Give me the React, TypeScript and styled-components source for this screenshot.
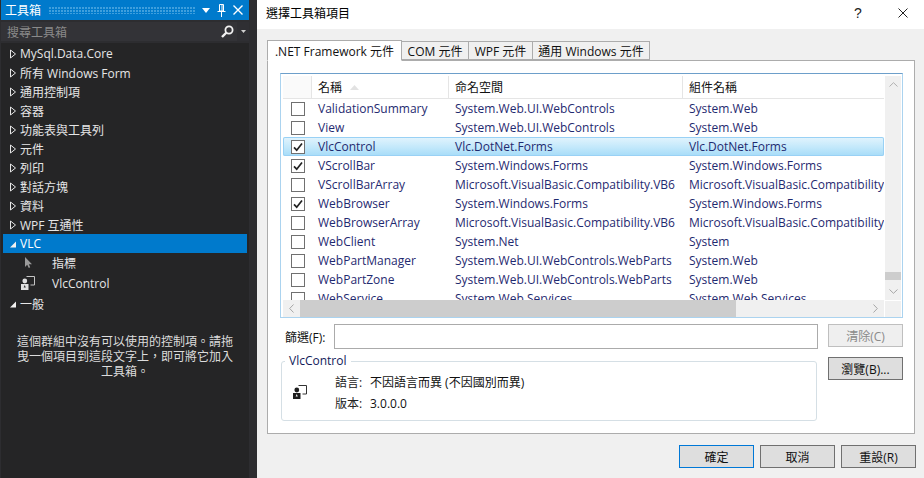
import React from "react";
import styled, { createGlobalStyle } from "styled-components";

const Global = createGlobalStyle`
  html, body { margin: 0; padding: 0; width: 924px; height: 478px; overflow: hidden; background: #f0f0f0; }
  #root { width: 924px; height: 478px; }
  * { box-sizing: border-box; }
`;
const FONT = `"Open Sans", "Noto Sans CJK TC", sans-serif`;

const Page = styled.div`
  display: flex; width: 924px; height: 478px; font-family: ${FONT}; font-size: 12px; overflow: hidden;
`;
const Toolbox = styled.aside`
  width: 257px; height: 478px; background: #2d2d30; padding: 0 8px 0 1px; display: flex; flex-direction: column; flex: none;
`;
const ToolTitle = styled.header`
  height: 20px; background: #007acc; color: #fff; display: flex; align-items: center; padding: 0 6px 0 4px; font-size: 12px; flex: none;
`;
const Grip = styled.div`
  flex: 1; height: 7px; margin: 0 6px 0 8px;
  background-image: radial-gradient(circle at 1px 1px, #3f9fdd 0.8px, transparent 1px);
  background-size: 3px 3px;
`;
const TitleIcons = styled.div`display: flex; align-items: center; gap: 7px; color: #fff;`;
const SearchRow = styled.div`
  height: 19px; margin-top: 2px; background: #333337; color: #8a8a8a; display: flex; align-items: center; padding-left: 6px; flex: none; font-size: 12px;
`;
const SearchText = styled.span`flex: 1;`;
const SearchIconWrap = styled.div`display: flex; align-items: center; padding-right: 3px;`;
const SearchCaret = styled.div`display: flex; align-items: center; justify-content: center; width: 12px; height: 100%; background: #2f2f33;`;
const Tree = styled.div`
  flex: 1; margin-top: 1px; background: #252526; color: #f1f1f1; padding: 1px 2px 0 2px; border-top: 1px solid #2d2d30;
`;
const TreeRow = styled.div<{ $active?: boolean }>`
  height: 19px; display: flex; align-items: center; padding-left: 6px; gap: 3px; white-space: nowrap; font-size: 12px;
  background: ${(p) => (p.$active ? "#007acc" : "transparent")};
  color: ${(p) => (p.$active ? "#fff" : "#e6e6e6")};
`;
const ToolRow = styled.div<{ $tall?: boolean }>`
  height: ${(p) => (p.$tall ? 22 : 19)}px; display: flex; align-items: center; white-space: nowrap; color: #e6e6e6; font-size: 12px;
  padding-left: 17px;
`;
const ToolIcon = styled.span`width: 16px; margin-right: 16px; display: flex; justify-content: center; flex: none;`;
const EmptyNote = styled.p`
  margin: 21px 13px 0; text-align: center; line-height: 15px; font-size: 12px; color: #dcdcdc;
`;

const Dialog = styled.main`flex: 1; min-width: 0; height: 478px; display: flex; flex-direction: column; background: #f0f0f0; color: #000;`;
const DialogTitle = styled.header`
  height: 29px; background: #fff; display: flex; align-items: center; padding: 0 16px 4px 9px; font-size: 12px; flex: none;
`;
const DialogName = styled.span`flex: 1;`;
const DialogHelp = styled.span`font-size: 14px; width: 8px; margin-right: 36px; color: #222; font-family: "Liberation Sans", sans-serif;`;
const TabArea = styled.section`margin: 10px 9px 0 10px; height: 395px; display: flex; flex-direction: column; flex: none;`;
const TabStrip = styled.div`display: flex; height: 21px; align-items: flex-end; flex: none; position: relative; z-index: 1;`;
const Tab = styled.div<{ $active?: boolean; $w: number }>`
  width: ${(p) => p.$w}px; height: ${(p) => (p.$active ? 21 : 19)}px; flex: none;
  border: 1px solid #acacac; border-bottom: ${(p) => (p.$active ? "1px solid #fff" : "1px solid #acacac")};
  margin-left: ${(p) => (p.$active ? 0 : -1)}px;
  margin-bottom: ${(p) => (p.$active ? -1 : 0)}px;
  background: ${(p) => (p.$active ? "#fff" : "#f0f0f0")};
  display: flex; align-items: center; justify-content: center; font-size: 12px; white-space: nowrap; color: #111;
`;
const TabPanel = styled.div`
  flex: 1; background: #fff; border: 1px solid #acacac; padding: 12px 11px 0 12px; display: flex; flex-direction: column;
`;
const ListFrame = styled.div`
  height: 245px; flex: none; border: 1px solid #abd3ef; border-top-color: #6d9fca; padding: 2px 1px 2px 2px; display: grid;
  grid-template-columns: 601px 17px; grid-template-rows: 224px 17px;
  background: #fff;
`;
const ListMain = styled.div`overflow: hidden; display: flex; flex-direction: column;`;
const COLUMNS = "28px 137px 234px 202px";
const HeaderRow = styled.div`
  height: 23px; flex: none; display: grid; grid-template-columns: ${COLUMNS}; border-bottom: 1px solid #e5e5e5; font-size: 12px;
`;
const HeaderCell = styled.div`
  display: flex; align-items: center; padding-left: 6px; border-left: 1px solid #e5e5e5; gap: 8px; color: #111; overflow: hidden; white-space: nowrap;
  &:first-child { border-left: 0; background: #fafafa; }
`;
const Row = styled.div<{ $selected?: boolean }>`
  height: 19px; flex: none; display: grid; grid-template-columns: ${COLUMNS}; align-items: center; font-size: 12px; color: #1f2a70;
  background: ${(p) => (p.$selected ? "linear-gradient(#e3f4fd, #c5e9fb 50%, #a6dcf8)" : "transparent")};
  box-shadow: ${(p) => (p.$selected ? "inset 0 0 0 1px #99d1f5" : "none")};
  border-radius: ${(p) => (p.$selected ? "2px" : "0")};
`;
const CheckCell = styled.div`display: flex; padding-left: 8px;`;
const CheckBox = styled.span`
  width: 14px; height: 14px; border: 1px solid #707070; background: #fff; display: flex; align-items: center; justify-content: center;
`;
const Cell = styled.div`padding-left: 7px; white-space: nowrap; overflow: hidden;`;
const VScroll = styled.div`
  background: #f0f0f0; display: flex; flex-direction: column; align-items: center; border-left: 1px solid #fff;
`;
const ScrollArrow = styled.div`height: 17px; flex: none; display: flex; align-items: center; justify-content: center; color: #a6a6a6; width: 17px;`;
const VTrack = styled.div`flex: 1; width: 100%; display: flex; flex-direction: column; justify-content: flex-end;`;
const VThumb = styled.div`height: 8px; background: #cdcdcd; margin-bottom: 3px;`;
const HScroll = styled.div`background: #f0f0f0; display: flex; align-items: stretch;`;
const HThumb = styled.div`width: 436px; background: #cdcdcd; flex: none;`;
const HTrack = styled.div`flex: 1;`;
const Corner = styled.div`background: #f0f0f0; border-left: 1px solid #fff; border-top: 1px solid #fff;`;
const Lower = styled.div`display: grid; grid-template-columns: 537px 85px; margin-top: 6px; margin-left: 1px;`;
const LeftLower = styled.div`display: flex; flex-direction: column;`;
const FilterRow = styled.div`display: flex; align-items: center; height: 25px; font-size: 12px; color: #111;`;
const FilterLabel = styled.label`width: 53px; padding-left: 4px; flex: none;`;
const FilterInput = styled.div`flex: 1; height: 25px; border: 1px solid #ababab; background: #fff;`;
const GroupBox = styled.fieldset`
  margin: 5px 0 0; padding: 7px 0 0 11px; height: 67px; width: 536px; border: 1px solid #d5dfe5; border-radius: 3px;
  display: flex; align-items: center; gap: 27px; min-width: 0;
`;
const GroupLegend = styled.legend`padding: 0 4px; margin-left: -8px; font-size: 12px; line-height: 14px; color: #111b5a;`;
const GroupIcon = styled.span`display: flex; margin-top: -4px; flex: none;`;
const InfoGrid = styled.dl`
  margin: 0; display: grid; grid-template-columns: 35px auto; row-gap: 5px; font-size: 12px; line-height: 16px; color: #111;
`;
const InfoTerm = styled.dt`color: #222;`;
const InfoValue = styled.dd`margin: 0;`;
const SideButtons = styled.div`display: flex; flex-direction: column; gap: 10px; padding-left: 10px;`;
const Button = styled.button<{ $disabled?: boolean; $default?: boolean }>`
  width: 75px; height: 23px; padding: 0; font-family: ${FONT}; font-size: 12px; flex: none;
  background: ${(p) => (p.$disabled ? "#efefef" : "#dedede")};
  color: ${(p) => (p.$disabled ? "#8a8a8a" : "#111")};
  border: 1px solid ${(p) => (p.$disabled ? "#bfbfbf" : p.$default ? "#0078d7" : "#707070")};
`;
const Footer = styled.footer`display: flex; justify-content: flex-end; gap: 6px; padding: 11px 8px 0 0;`;

const Arrow = ({ open }: { open?: boolean }) => (
  <svg width="8" height="10" viewBox="0 0 8 10" style={{ flex: "none" }}>
    {open ? <path d="M1 8.5H7V2.5Z" fill="#f1f1f1" /> : <path d="M1.5 1V9L6.5 5Z" fill="none" stroke="#e6e6e6" />}
  </svg>
);
const ControlIcon = ({ dark }: { dark?: boolean }) => {
  const line = dark ? "#333" : "#c4c4c4";
  const fill = dark ? "#1e1e1e" : "#e0e0e0";
  return (
    <svg width="15" height="14" viewBox="0 0 15 14" style={{ flex: "none" }}>
      <path d="M5.5 .5H13.5V9H9.5" fill="none" stroke={line} />
      <circle cx="3.8" cy="5" r="2.4" fill={fill} />
      <path d="M0 8H7.5V14H0Z" fill={fill} />
      <path d="M3.7 9 4.8 11.5H2.7Z" fill={dark ? "#fff" : "#252526"} />
    </svg>
  );
};
const Check = () => (
  <svg width="10" height="10" viewBox="0 0 10 10">
    <path d="M1 5.4 3.7 8.2 9 1.4" fill="none" stroke="#222" strokeWidth="1.7" />
  </svg>
);

type Item = [string, string, string, boolean];
const ITEMS: Item[] = [
  ["ValidationSummary", "System.Web.UI.WebControls", "System.Web", false],
  ["View", "System.Web.UI.WebControls", "System.Web", false],
  ["VlcControl", "Vlc.DotNet.Forms", "Vlc.DotNet.Forms", true],
  ["VScrollBar", "System.Windows.Forms", "System.Windows.Forms", true],
  ["VScrollBarArray", "Microsoft.VisualBasic.Compatibility.VB6", "Microsoft.VisualBasic.Compatibility", false],
  ["WebBrowser", "System.Windows.Forms", "System.Windows.Forms", true],
  ["WebBrowserArray", "Microsoft.VisualBasic.Compatibility.VB6", "Microsoft.VisualBasic.Compatibility", false],
  ["WebClient", "System.Net", "System", false],
  ["WebPartManager", "System.Web.UI.WebControls.WebParts", "System.Web", false],
  ["WebPartZone", "System.Web.UI.WebControls.WebParts", "System.Web", false],
  ["WebService", "System.Web.Services", "System.Web.Services", false],
];
const GROUPS = ["MySql.Data.Core", "所有 Windows Form", "通用控制項", "容器", "功能表與工具列", "元件", "列印", "對話方塊", "資料", "WPF 互通性"];

export default function App() {
  return (
    <Page>
      <Global />
      <Toolbox>
        <ToolTitle>
          工具箱
          <Grip />
          <TitleIcons>
            <svg width="8" height="5" viewBox="0 0 8 5"><path d="M0 0H8L4 5Z" fill="#fff" /></svg>
            <svg width="9" height="13" viewBox="0 0 9 13"><path d="M2.5 .5H6.5V7H2.5ZM5 1V7M.5 7.5H8.5M4.5 8V13" fill="none" stroke="#fff" /></svg>
            <svg width="10" height="10" viewBox="0 0 10 10"><path d="M.5 .5 9.5 9.5M9.5 .5 .5 9.5" stroke="#fff" strokeWidth="1.4" /></svg>
          </TitleIcons>
        </ToolTitle>
        <SearchRow>
          <SearchText>搜尋工具箱</SearchText>
          <SearchIconWrap>
            <svg width="13" height="13" viewBox="0 0 13 13"><circle cx="8" cy="5" r="3.6" fill="none" stroke="#f1f1f1" strokeWidth="1.8" /><path d="M5.5 7.5 1 12" stroke="#f1f1f1" strokeWidth="2.4" /></svg>
          </SearchIconWrap>
          <SearchCaret>
            <svg width="5" height="3" viewBox="0 0 5 3"><path d="M0 0H5L2.5 3Z" fill="#d0d0d0" /></svg>
          </SearchCaret>
        </SearchRow>
        <Tree>
          {GROUPS.map((g) => (
            <TreeRow key={g}><Arrow />{g}</TreeRow>
          ))}
          <TreeRow $active><Arrow open />VLC</TreeRow>
          <ToolRow>
            <ToolIcon><svg width="7" height="11" viewBox="0 0 7 11"><path d="M0 0V10L2.2 7.8 3.8 11 5.2 10.3 3.8 7.3H7Z" fill="#9a9a9a" /></svg></ToolIcon>
            指標
          </ToolRow>
          <ToolRow $tall>
            <ToolIcon><ControlIcon /></ToolIcon>
            VlcControl
          </ToolRow>
          <TreeRow><Arrow open />一般</TreeRow>
          <EmptyNote>這個群組中沒有可以使用的控制項。請拖曳一個項目到這段文字上，即可將它加入工具箱。</EmptyNote>
        </Tree>
      </Toolbox>
      <Dialog>
        <DialogTitle>
          <DialogName>選擇工具箱項目</DialogName>
          <DialogHelp>?</DialogHelp>
          <svg width="10" height="10" viewBox="0 0 10 10" style={{ flex: "none" }}><path d="M.5 .5 9.5 9.5M9.5 .5 .5 9.5" stroke="#222" /></svg>
        </DialogTitle>
        <TabArea>
          <TabStrip>
            <Tab $active $w={135}>.NET Framework 元件</Tab>
            <Tab $w={68}>COM 元件</Tab>
            <Tab $w={65}>WPF 元件</Tab>
            <Tab $w={118}>通用 Windows 元件</Tab>
          </TabStrip>
          <TabPanel>
            <ListFrame>
              <ListMain>
                <HeaderRow>
                  <HeaderCell />
                  <HeaderCell>名稱<svg width="9" height="5" viewBox="0 0 9 5"><path d="M0 5H9L4.5 0Z" fill="#e2e2e2" /></svg></HeaderCell>
                  <HeaderCell>命名空間</HeaderCell>
                  <HeaderCell>組件名稱</HeaderCell>
                </HeaderRow>
                {ITEMS.map(([name, ns, asm, checked]) => (
                  <Row key={name} $selected={name === "VlcControl"}>
                    <CheckCell><CheckBox>{checked && <Check />}</CheckBox></CheckCell>
                    <Cell>{name}</Cell>
                    <Cell>{ns}</Cell>
                    <Cell>{asm}</Cell>
                  </Row>
                ))}
              </ListMain>
              <VScroll>
                <ScrollArrow><svg width="9" height="5" viewBox="0 0 9 5"><path d="M.5 4.5 4.5 .7 8.5 4.5" fill="none" stroke="#b0b0b0" /></svg></ScrollArrow>
                <VTrack><VThumb /></VTrack>
                <ScrollArrow><svg width="9" height="5" viewBox="0 0 9 5"><path d="M.5 .5 4.5 4.3 8.5 .5" fill="none" stroke="#a6a6a6" /></svg></ScrollArrow>
              </VScroll>
              <HScroll>
                <ScrollArrow><svg width="5" height="9" viewBox="0 0 5 9"><path d="M4.5 .5 .7 4.5 4.5 8.5" fill="none" stroke="#a6a6a6" /></svg></ScrollArrow>
                <HThumb />
                <HTrack />
                <ScrollArrow><svg width="5" height="9" viewBox="0 0 5 9"><path d="M.5 .5 4.3 4.5 .5 8.5" fill="none" stroke="#a6a6a6" /></svg></ScrollArrow>
              </HScroll>
              <Corner />
            </ListFrame>
            <Lower>
              <LeftLower>
                <FilterRow>
                  <FilterLabel>篩選(F):</FilterLabel>
                  <FilterInput />
                </FilterRow>
                <GroupBox>
                  <GroupLegend>VlcControl</GroupLegend>
                  <GroupIcon><ControlIcon dark /></GroupIcon>
                  <InfoGrid>
                    <InfoTerm>語言:</InfoTerm><InfoValue>不因語言而異 (不因國別而異)</InfoValue>
                    <InfoTerm>版本:</InfoTerm><InfoValue>3.0.0.0</InfoValue>
                  </InfoGrid>
                </GroupBox>
              </LeftLower>
              <SideButtons>
                <Button $disabled>清除(C)</Button>
                <Button>瀏覽(B)...</Button>
              </SideButtons>
            </Lower>
          </TabPanel>
        </TabArea>
        <Footer>
          <Button $default>確定</Button>
          <Button>取消</Button>
          <Button>重設(R)</Button>
        </Footer>
      </Dialog>
    </Page>
  );
}
